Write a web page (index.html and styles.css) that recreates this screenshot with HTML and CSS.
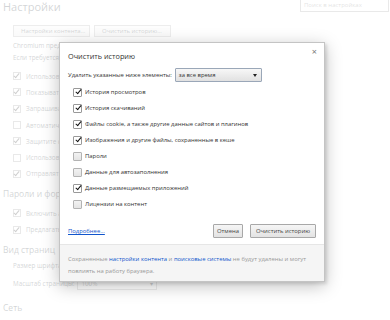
FILE: index.html
```html
<!DOCTYPE html>
<html lang="ru">
<head>
<meta charset="utf-8">
<title>Настройки</title>
<link rel="stylesheet" href="styles.css">
</head>
<body>
<div class="page">
  <header class="top">
    <h1 class="title">Настройки</h1>
    <div class="search">Поиск в настройках</div>
  </header>
  <div class="group">
    <div class="btnrow">
      <span class="pbtn">Настройки контента...</span>
      <span class="pbtn">Очистить историю...</span>
    </div>
    <p class="ptext">Chromium предоставляет веб-службы для более удобной работы в Интернете.</p>
    <p class="ptext">Если требуется, эти службы можно отключить.</p>
    <ul class="plist">
      <li><span class="pcb on"></span>Использовать веб-службу для разрешения проблем навигации</li>
      <li><span class="pcb on"></span>Показывать подсказки при вводе поисковых запросов</li>
      <li><span class="pcb on"></span>Запрашивать сведения о ресурсах страницы</li>
      <li><span class="pcb"></span>Автоматически отправлять статистику</li>
      <li><span class="pcb on"></span>Защитите свой компьютер от опасных сайтов</li>
      <li><span class="pcb"></span>Использовать веб-службу для проверки правописания</li>
      <li><span class="pcb on"></span>Отправлять запрет отслеживания</li>
    </ul>
  </div>
  <h2 class="phead">Пароли и формы</h2>
  <div class="group">
    <ul class="plist">
      <li><span class="pcb on"></span>Включить автозаполнение форм</li>
      <li><span class="pcb on"></span>Предлагать сохранять пароли</li>
    </ul>
  </div>
  <h2 class="phead">Вид страниц</h2>
  <div class="group">
    <div class="prow">Размер шрифта:</div>
    <div class="prow">Масштаб страницы: <span class="psel">100%<span class="parr">▾</span></span></div>
  </div>
  <h2 class="phead">Сеть</h2>
</div>
<div class="overlay"></div>
<div class="dialog">
  <div class="dbody">
    <div class="dtitle">Очистить историю<span class="close">×</span></div>
    <div class="timerow">
      <span>Удалить указанные ниже элементы:</span>
      <span class="select">за все время<span class="arrow"></span></span>
    </div>
    <ul class="items">
      <li><span class="cb on"></span>История просмотров</li>
      <li><span class="cb on"></span>История скачиваний</li>
      <li><span class="cb on"></span>Файлы cookie, а также другие данные сайтов и плагинов</li>
      <li><span class="cb on"></span>Изображения и другие файлы, сохраненные в кеше</li>
      <li><span class="cb"></span>Пароли</li>
      <li><span class="cb"></span>Данные для автозаполнения</li>
      <li><span class="cb on"></span>Данные размещаемых приложений</li>
      <li><span class="cb"></span>Лицензии на контент</li>
    </ul>
    <div class="actions">
      <a class="more" href="#">Подробнее...</a>
      <span class="btn cancel">Отмена</span>
      <span class="btn clear">Очистить историю</span>
    </div>
  </div>
  <div class="dfoot">Сохраненные <a href="#">настройки контента</a> и <a href="#">поисковые системы</a> не будут удалены и могут повлиять на работу браузера.</div>
</div>
</body>
</html>
```
FILE: styles.css
```css
html, body {
  margin: 0;
  padding: 0;
  background: #fff;
}
body {
  width: 390px;
  height: 320px;
  overflow: hidden;
  position: relative;
  font-family: "Open Sans", "Liberation Sans", sans-serif;
  color: #303942;
}
.page {
  padding: 0 0 0 3px;
}
.top {
  display: flex;
  justify-content: space-between;
  align-items: flex-start;
  height: 25px;
}
.title {
  margin: 0;
  font-size: 11px;
  font-weight: normal;
  line-height: 13px;
}
.search {
  width: 84px;
  height: 11px;
  border: 1px solid #999;
  font-size: 6px;
  line-height: 11px;
  color: #777;
  padding-left: 3px;
  margin-right: 1px;
  margin-top: -1px;
}
.group {
  padding-left: 10px;
}
.btnrow {
  display: flex;
  gap: 4px;
  height: 12px;
}
.pbtn {
  border: 1px solid #aaa;
  background: linear-gradient(#f6f6f6, #e4e4e4);
  font-size: 6px;
  line-height: 10px;
  padding: 0 7px;
  width: 61px;
  white-space: nowrap;
  overflow: hidden;
}
.ptext {
  margin: 0;
  font-size: 6.3px;
  line-height: 12px;
  white-space: nowrap;
}
.btnrow + .ptext {
  margin-top: 3px;
}
.plist {
  list-style: none;
  margin: 4px 0 0;
  padding: 0;
}
.plist li {
  height: 16.3px;
  display: flex;
  align-items: center;
  font-size: 6.3px;
  white-space: nowrap;
}
.pcb {
  width: 6px;
  height: 6px;
  border: 1px solid #999;
  margin-right: 5px;
  position: relative;
  flex: none;
}
.pcb.on::after {
  content: "";
  position: absolute;
  left: 1px;
  top: -1px;
  width: 2px;
  height: 5px;
  border: solid #222;
  border-width: 0 1.5px 1.5px 0;
  transform: rotate(40deg);
}
.phead {
  margin: 0;
  font-size: 8.5px;
  font-weight: normal;
  line-height: 14px;
}
.group + .phead {
  margin-top: 8px;
}
.group:has(.plist) + .phead {
  margin-top: 5px;
}
.prow {
  font-size: 6.3px;
  height: 18px;
  display: flex;
  align-items: center;
  gap: 3px;
  white-space: nowrap;
}
.psel {
  display: inline-flex;
  justify-content: space-between;
  width: 72px;
  border: 1px solid #aaa;
  padding: 0 3px;
  line-height: 10px;
}
.overlay {
  position: absolute;
  inset: 0;
  background: rgba(255, 255, 255, 0.79);
}
.dialog {
  position: absolute;
  left: 59px;
  top: 42px;
  width: 266px;
  height: 240px;
  background: #fff;
  border: 1px solid #c4c4c4;
  box-sizing: border-box;
  box-shadow: 0 4px 16px rgba(0, 0, 0, 0.25), 2px 2px 3px rgba(0, 0, 0, 0.12);
  display: flex;
  flex-direction: column;
  color: #333;
  overflow: hidden;
}
.dbody {
  flex: 1;
  padding: 0 8px;
}
.dtitle {
  font-size: 7.3px;
  line-height: 12px;
  margin-top: 7px;
  position: relative;
}
.close {
  position: absolute;
  right: -1px;
  top: -3px;
  font-size: 9px;
  color: #777;
  line-height: 9px;
}
.timerow {
  display: flex;
  align-items: center;
  gap: 3px;
  font-size: 5.9px;
  margin-top: 6px;
  height: 14px;
  white-space: nowrap;
}
.select {
  display: inline-flex;
  align-items: center;
  justify-content: space-between;
  width: 87px;
  height: 14px;
  box-sizing: border-box;
  border: 1px solid #9aa7b8;
  background: linear-gradient(#f7f7f7, #e1e1e1);
  padding: 0 4px 0 3px;
  border-radius: 1px;
}
.arrow {
  width: 0;
  height: 0;
  border-left: 2.5px solid transparent;
  border-right: 2.5px solid transparent;
  border-top: 3px solid #222;
}
.items {
  list-style: none;
  margin: 2px 0 0;
  padding: 0 0 0 5px;
}
.items li {
  height: 16px;
  display: flex;
  align-items: center;
  font-size: 5.9px;
  white-space: nowrap;
}
.cb {
  width: 7px;
  height: 7px;
  border: 1px solid #b3b3b3;
  border-radius: 1px;
  background: linear-gradient(#f2f2f2, #e4e4e4);
  margin-right: 3px;
  position: relative;
  flex: none;
}
.cb.on {
  background: #fff;
  border-color: #999;
}
.cb.on::after {
  content: "";
  position: absolute;
  left: 2.5px;
  top: -0.5px;
  width: 2px;
  height: 5px;
  border: solid #111;
  border-width: 0 1.6px 1.6px 0;
  transform: rotate(40deg);
}
.actions {
  display: flex;
  align-items: center;
  margin-top: 12px;
  gap: 7px;
  height: 14px;
}
.more {
  font-size: 5.9px;
  color: #15c;
  margin-right: auto;
}
.btn {
  border: 1px solid #a8a8a8;
  border-radius: 1px;
  background: linear-gradient(#f6f6f6, #e3e3e3);
  font-size: 5.9px;
  color: #444;
  height: 14px;
  box-sizing: border-box;
  line-height: 12px;
  text-align: center;
  white-space: nowrap;
}
.cancel {
  width: 30px;
}
.clear {
  width: 66px;
}
.dfoot {
  background: #f5f5f5;
  border-top: 1px solid #e6e6e6;
  height: 37px;
  flex: none;
  box-sizing: border-box;
  padding: 8px 8px 0;
  font-size: 5.9px;
  line-height: 12px;
  color: #999;
}
.dfoot a {
  color: #15c;
  text-decoration: none;
}
```
